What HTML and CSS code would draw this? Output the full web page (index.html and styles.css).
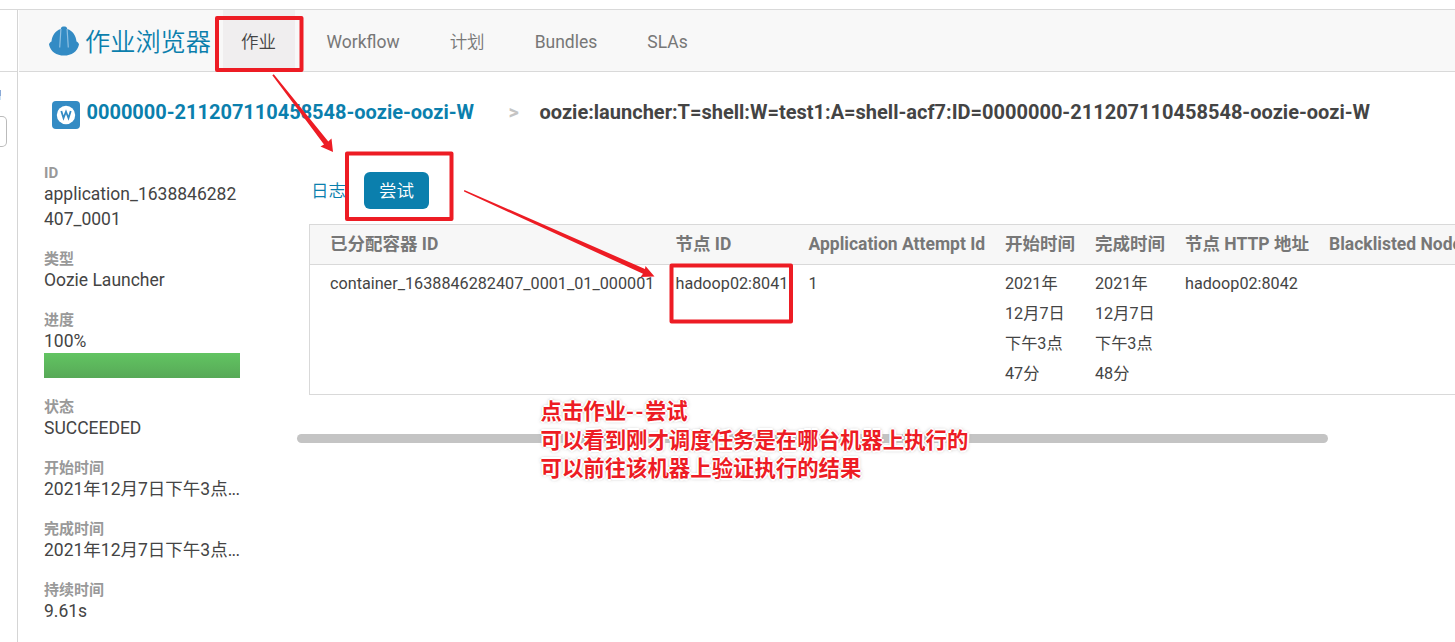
FILE: index.html
```html
<!DOCTYPE html>
<html lang="zh-CN">
<head>
<meta charset="utf-8">
<title>作业浏览器</title>
<link rel="stylesheet" href="styles.css">
</head>
<body>
<div class="topline"></div>
<div class="shell">
  <aside class="strip">
    <div class="strip-head"></div>
    <div class="strip-body"><div class="strip-mark"></div><div class="strip-input"></div></div>
  </aside>
  <main class="main">
    <header class="navbar">
      <a class="brand">
        <svg class="hat" viewBox="0 0 30 30" width="30" height="30"><path fill="#338bc4" d="M12 2.200C12 .9 13.300 .4 15 .4s3 .5 3 1.800L18.300 3C24 5 26.800 9.500 27.500 15.500c1.300.600 2.200 1.500 2.500 2.900C28.500 25.500 22.500 29.500 15 29.500S1.500 25.500 0 18.400c.3-1.400 1.200-2.300 2.500-2.900C3.200 9.500 6 5 11.700 3z"/><path fill="none" stroke="#8fc0e2" stroke-width="1.200" d="M11.900 3 10.700 21.500M18.100 3l1.200 18.500"/></svg>
        <span class="brand-name">作业浏览器</span>
      </a>
      <nav class="tabs">
        <a class="tab active">作业</a><a class="tab">Workflow</a><a class="tab cjk">计划</a><a class="tab">Bundles</a><a class="tab">SLAs</a>
      </nav>
    </header>
    <div class="crumbs">
      <svg class="wf" viewBox="0 0 28 28" width="28" height="28"><rect width="28" height="28" rx="4" fill="#338bc4"/><circle cx="14" cy="14" r="9.200" fill="#fff"/><path d="M9.300 10 11.500 17 14 10.600l2.500 6.400 2.200-7" fill="none" stroke="#338bc4" stroke-width="1.800"/></svg>
      <a class="crumb-link">0000000-211207110458548-oozie-oozi-W</a>
      <span class="crumb-sep">&gt;</span>
      <span class="crumb-cur">oozie:launcher:T=shell:W=test1:A=shell-acf7:ID=0000000-211207110458548-oozie-oozi-W</span>
    </div>
    <div class="content">
      <dl class="details">
        <dt>ID</dt><dd class="wrap">application_1638846282407_0001</dd>
        <dt>类型</dt><dd>Oozie Launcher</dd>
        <dt>进度</dt><dd class="has-bar">100%<div class="progress"></div></dd>
        <dt>状态</dt><dd>SUCCEEDED</dd>
        <dt>开始时间</dt><dd class="date">2021年12月7日下午3点<span class="dots">...</span></dd>
        <dt>完成时间</dt><dd class="date">2021年12月7日下午3点<span class="dots">...</span></dd>
        <dt>持续时间</dt><dd>9.61s</dd>
      </dl>
      <section class="panel">
        <div class="pills"><a class="pill">日志</a><a class="pill on">尝试</a></div>
        <table class="attempts">
          <colgroup><col class="c1"><col class="c2"><col class="c3"><col class="c4"><col class="c5"><col class="c6"><col class="c7"></colgroup>
          <thead><tr><th>已分配容器 ID</th><th>节点 ID</th><th>Application Attempt Id</th><th>开始时间</th><th>完成时间</th><th>节点 HTTP 地址</th><th>Blacklisted Nodes</th></tr></thead>
          <tbody><tr><td>container_1638846282407_0001_01_000001</td><td>hadoop02:8041</td><td>1</td><td>2021年<br>12月7日<br>下午3点<br>47分</td><td>2021年<br>12月7日<br>下午3点<br>48分</td><td>hadoop02:8042</td><td></td></tr></tbody>
        </table>
        <div class="scrollbar"></div>
      </section>
    </div>
  </main>
</div>
<svg class="marks" viewBox="0 0 1455 642" width="1455" height="642">
  <g fill="none" stroke="#ed1c24" stroke-width="4" stroke-linejoin="round">
    <rect x="217" y="18" width="84.500" height="52"/>
    <rect x="347" y="153.500" width="104.500" height="65.500"/>
    <rect x="671.500" y="265.500" width="119.500" height="56"/>
  </g>
  <g fill="#ed1c24">
    <path d="M272.300 75.200 273.800 74.200 328.300 141.500 331.500 138.500 333 152 320.500 146.500 324 144.500z"/>
    <path d="M464.300 190 464 191.500 643 273.800 640.500 277 654.500 276.500 645.500 266 645 269z"/>
  </g>
</svg>
<div class="note"><div>点击作业<span class="dash">--</span>尝试</div><div>可以看到刚才调度任务是在哪台机器上执行的</div><div>可以前往该机器上验证执行的结果</div></div>
</body>
</html>
```
FILE: styles.css
```css
* { box-sizing: border-box; }
body { margin: 0; width: 1455px; height: 642px; overflow: hidden; position: relative; background: #fff; color: #444; font: 17.5px/25px Roboto, "Noto Sans CJK SC", sans-serif; }
.topline { height: 10px; border-bottom: 1px solid #d9d9d9; }
.shell { display: flex; height: 632px; }
.strip { width: 18px; flex: none; border-right: 1px solid #d5d5d5; }
.strip-head { height: 62px; border-bottom: 1px solid #d9d9d9; }
.strip-body { padding-top: 18px; }
.strip-mark { width: 1px; height: 10px; background: linear-gradient(#8aa9d6 60%, #cfe3f5 60%); }
.strip-input { width: 7px; height: 31px; margin-top: 16px; border: 1px solid #bbb; border-left: 0; border-radius: 0 5px 5px 0; }
.main { flex: none; width: 1437px; overflow: hidden; }
.navbar { display: flex; height: 62px; margin-left: 1px; padding-left: 30px; background: #f8f8f8; border-bottom: 1px solid #d9d9d9; }
.brand { display: flex; align-items: center; width: 174px; flex: none; color: #0b7fad; }
.hat { flex: none; margin-top: 1px; }
.brand-name { margin: 0 0 1px 6px; font-family: "Noto Sans CJK SC", sans-serif; font-size: 25.200px; font-weight: 350; white-space: nowrap; }
.tabs { display: flex; color: #777; }
.tab { padding: 2px 18px 0; margin-right: 14px; line-height: 60px; }
.tab.active { background: #f0eeef; color: #444; }
.tab.active, .tab.cjk { font-weight: 350; }
.tab.active { padding: 2px 18.500px 0 18px; }
.crumbs { display: flex; align-items: center; height: 57px; margin-top: 14px; padding-left: 34px; font-size: 20px; font-weight: 700; white-space: nowrap; }
.crumb-link, .crumb-sep, .crumb-cur { margin-top: -4px; }
.crumb-link { margin-left: 6.500px; color: #0b7fad; width: 388px; letter-spacing: -.015px; }
.crumb-sep { margin-left: 34px; width: 31px; color: #c4c4c4; font-size: 20px; }
.content { display: flex; margin-top: 21px; padding-left: 26px; }
.details { width: 196px; flex: none; margin: 1px 0 0; }
.details dt { font-size: 15px; line-height: 17px; font-weight: 700; color: #999; }
.details dd { margin: 0 0 19px; }
.details .has-bar { margin-bottom: 21px; }
.wrap { word-break: break-all; }
.date { white-space: nowrap; }
.dots { letter-spacing: -.700px; }
.progress { height: 25px; margin-top: -1px; background: linear-gradient(#62c462, #57a957); }
.panel { margin-left: 57px; padding-top: 8px; width: 1158px; }
.pills { display: flex; height: 37px; margin-left: 14px; line-height: 38px; font-weight: 350; }
.pill { color: #0b7fad; width: 53px; }
.pill.on { width: 65px; background: #0b7fad; color: #fff; border-radius: 6px; text-align: center; }
.attempts { width: 1260px; margin: 15px 0 0 12px; table-layout: fixed; border-collapse: separate; border-spacing: 0; border: 1px solid #d9d9d9; }
.c1 { width: 355.500px; } .c2 { width: 133px; } .c3 { width: 196.500px; } .c4 { width: 90px; } .c5 { width: 90px; } .c6 { width: 144px; }
th { height: 40px; padding: 0 0 0 10px; text-align: left; background: #f7f7f7; color: #777; font-weight: 700; white-space: nowrap; border-bottom: 1px solid #d9d9d9; }
td { height: 129px; padding: 4px 0 0 10px; vertical-align: top; font-size: 16.200px; line-height: 30px; white-space: nowrap; }
th:first-child, td:first-child { padding-left: 20px; }
.scrollbar { width: 1031px; height: 9px; margin-top: 39px; border-radius: 5px; background: #c4c4c4; }
.marks { position: absolute; left: 0; top: 0; }
.note { position: absolute; left: 540.500px; top: 396px; color: #ed1c24; font: 700 21.400px/28.500px "Noto Sans CJK SC", sans-serif; white-space: nowrap; text-shadow: 1px 0 #fff, -1px 0 #fff, 0 1px #fff, 0 -1px #fff, 2px 0 #fff, -2px 0 #fff, 0 2px #fff, 0 -2px #fff, 0 0 3px #999, 0 0 4px #aaa; }
.dash { letter-spacing: 1.500px; }
```
